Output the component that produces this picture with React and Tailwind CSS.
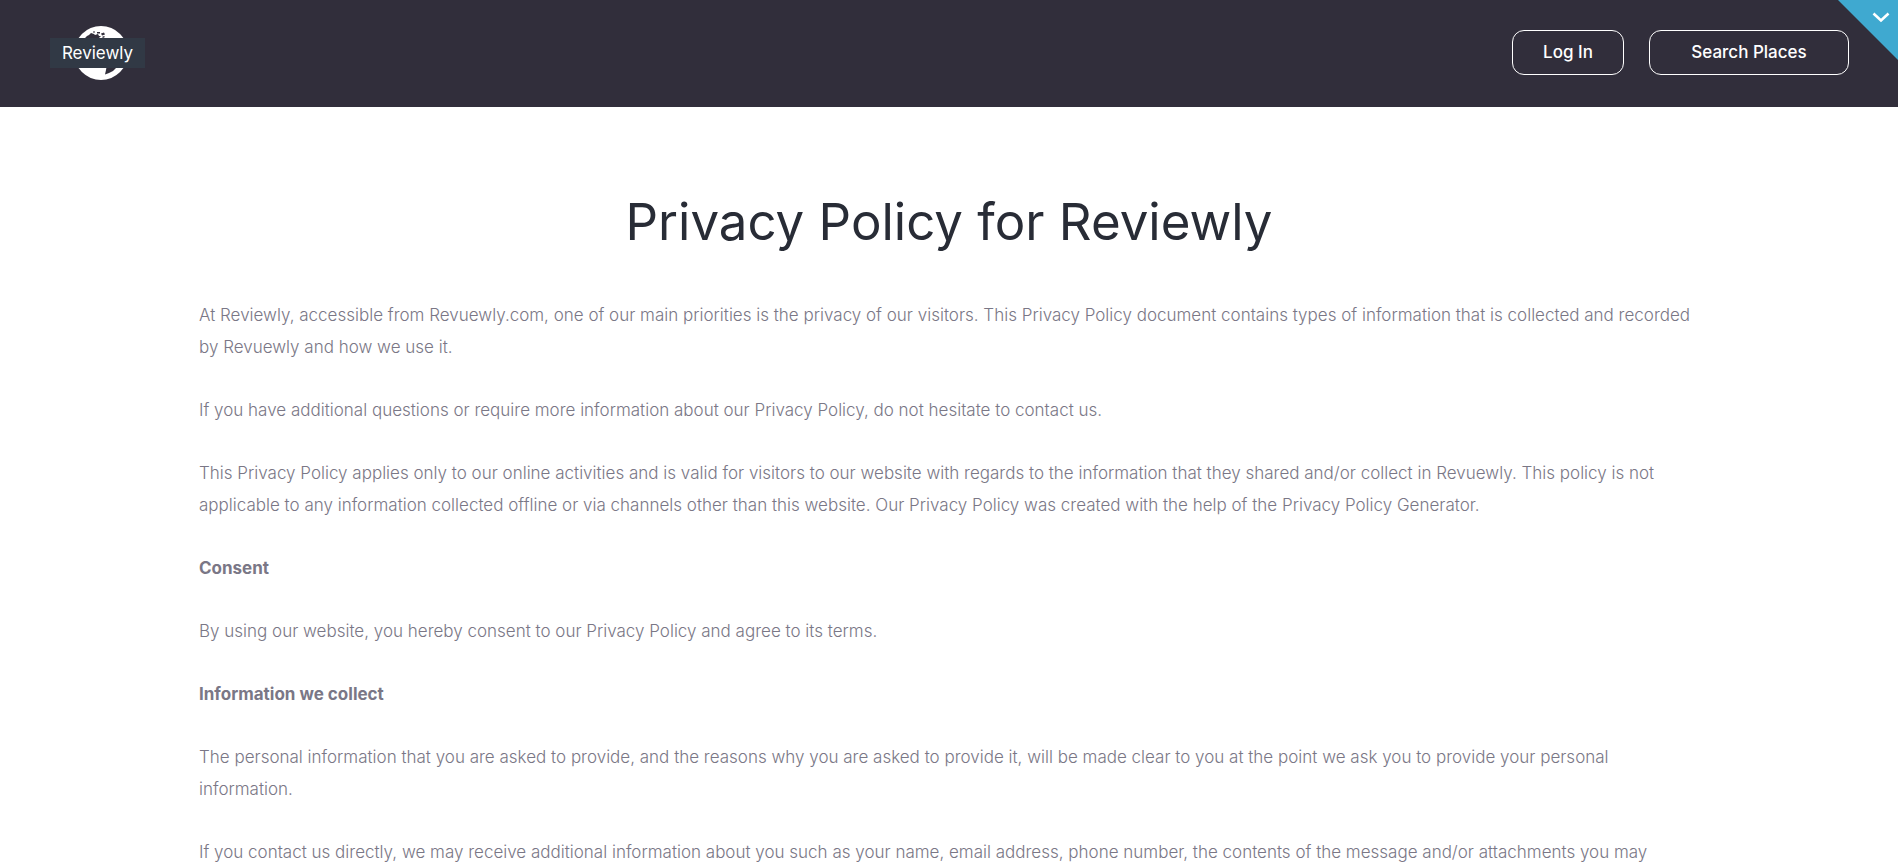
import React from 'react';

const sections = [
  { text: 'At Reviewly, accessible from Revuewly.com, one of our main priorities is the privacy of our visitors. This Privacy Policy document contains types of information that is collected and recorded by Revuewly and how we use it.' },
  { text: 'If you have additional questions or require more information about our Privacy Policy, do not hesitate to contact us.' },
  { text: 'This Privacy Policy applies only to our online activities and is valid for visitors to our website with regards to the information that they shared and/or collect in Revuewly. This policy is not applicable to any information collected offline or via channels other than this website. Our Privacy Policy was created with the help of the Privacy Policy Generator.' },
  { heading: true, text: 'Consent' },
  { text: 'By using our website, you hereby consent to our Privacy Policy and agree to its terms.' },
  { heading: true, text: 'Information we collect' },
  { text: 'The personal information that you are asked to provide, and the reasons why you are asked to provide it, will be made clear to you at the point we ask you to provide your personal information.' },
  { text: 'If you contact us directly, we may receive additional information about you such as your name, email address, phone number, the contents of the message and/or attachments you may' },
];

function Logo() {
  return (
    <a href="#" className="relative flex items-center justify-center h-[54px] w-[95px]">
      {/* Globe */}
      <svg viewBox="0 0 54 54" className="absolute right-[17px] w-[54px] h-[54px]" aria-hidden="true">
        <circle cx="27" cy="27" r="27" fill="#fff" />
        <g fill="#312e3b">
          <path d="M10 13l3-3 2-1 2-2 3 1 1 1 3-1 1 2 2 0-2 2-1 1z" />
          <path d="M19 5.500h2v1h-2zM23 6h3v1.500h-3zM27 7.500l3-1 1 2-3 1zM28 11l2-1 1 1-2 1z" />
          <path d="M32.500 41l-.5 3-1 4.500 4-1.500 4-2 4-4z" />
        </g>
      </svg>
      <span className="relative bg-[#313945] text-white text-[17px] leading-[30px] w-full text-center">Reviewly</span>
    </a>
  );
}

export default function App() {
  return (
    <div className="min-h-screen bg-white font-['Inter',sans-serif]">
      {/* Header */}
      <header className="relative flex items-center justify-between bg-[#312e3b] h-[107px] pl-[50px] pr-[49px] pb-0.5">
        <Logo />
        <nav className="flex items-center gap-[25px]">
          <button className="h-[45px] w-28 rounded-xl border border-white text-white text-[17px] font-medium">Log In</button>
          <button className="h-[45px] w-50 rounded-xl border border-white text-white text-[17px] font-medium">Search Places</button>
        </nav>
        <button
          aria-label="Open menu"
          className="absolute top-0 right-0 w-[60px] h-[60px] bg-[#3fa9d0] [clip-path:polygon(0_0,100%_0,100%_100%)]"
        >
          <svg viewBox="0 0 18 12" className="absolute top-3 right-2 w-[18px] h-3" fill="none" stroke="#fff" strokeWidth="2.600">
            <path d="M1.500 1.500L9 8.500L16.500 1.500" />
          </svg>
        </button>
      </header>

      {/* Policy text */}
      <main className="max-w-[1500px] mx-auto pt-20">
        <h1 className="text-center text-[51px] leading-[70px] text-[#282c36]">Privacy Policy for Reviewly</h1>
        <div className="flex flex-col gap-[31px] mt-[42px] text-[17px] leading-8 font-light text-[#7a7786]">
          {sections.map(({ heading, text }) =>
            heading ? (
              <h2 key={text} className="font-bold">{text}</h2>
            ) : (
              <p key={text}>{text}</p>
            )
          )}
        </div>
      </main>
    </div>
  );
}
